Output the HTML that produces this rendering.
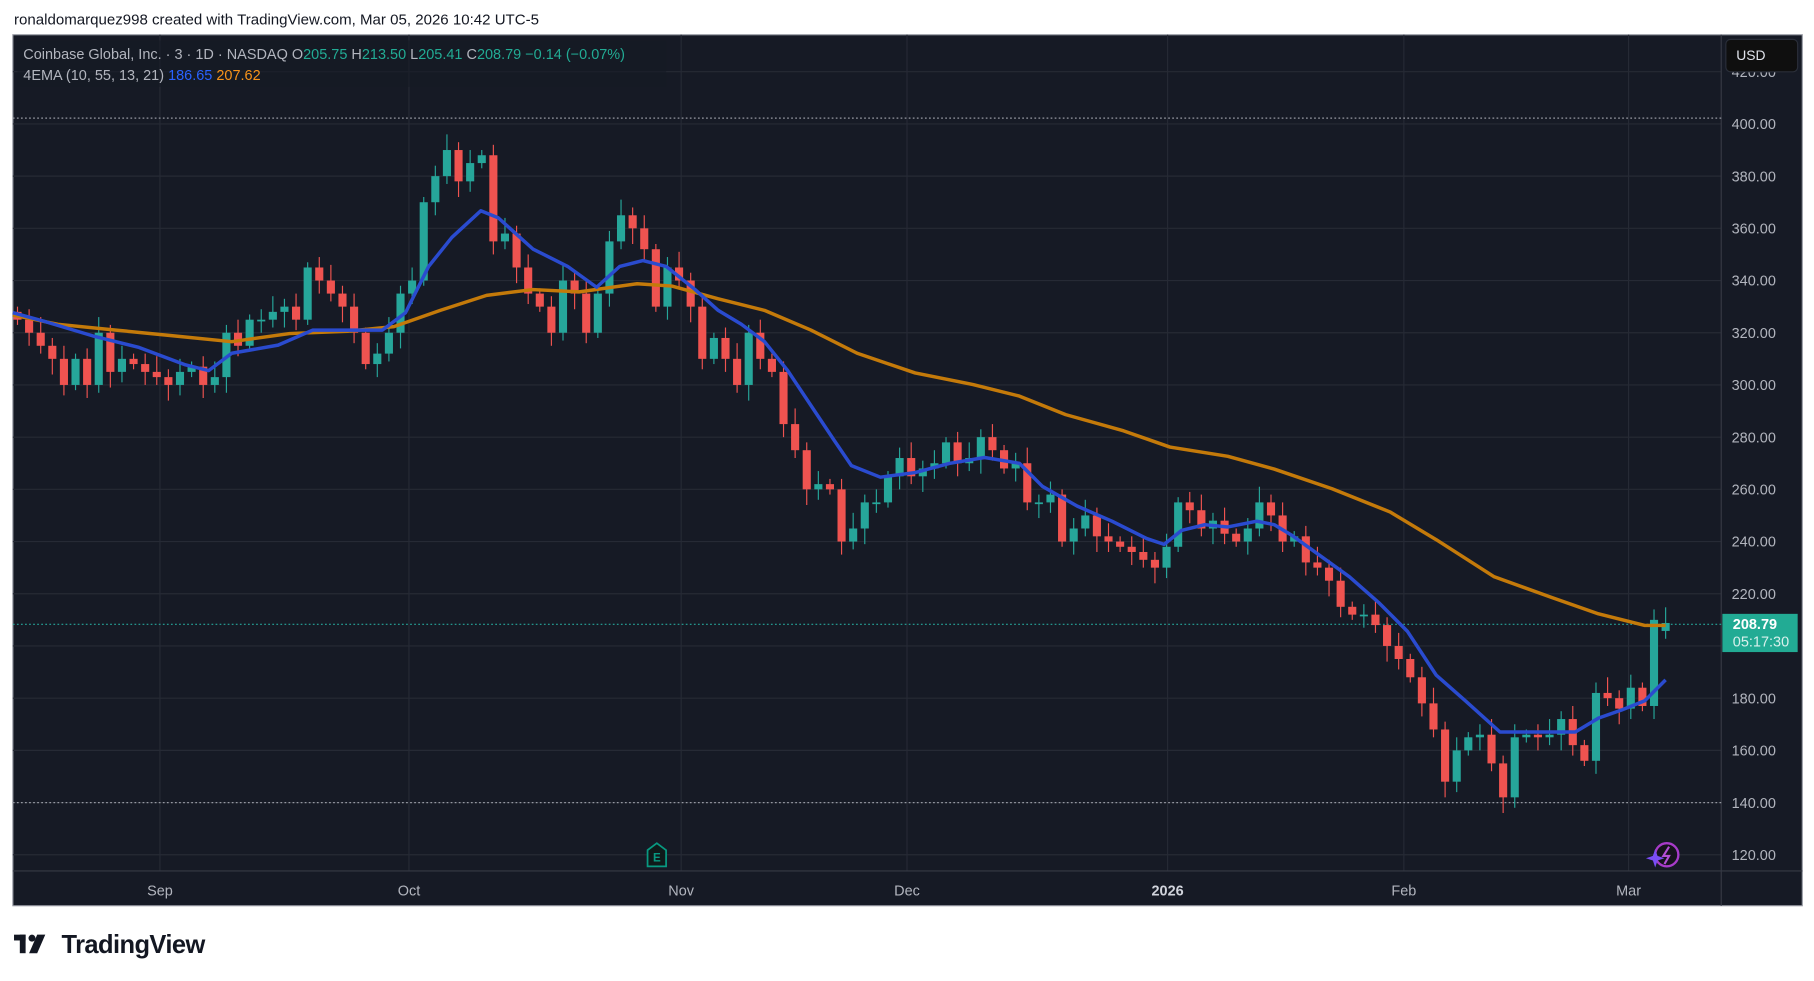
<!DOCTYPE html>
<html><head><meta charset="utf-8"><style>
html,body{margin:0;padding:0;background:#fff;width:1814px;height:981px;overflow:hidden}
svg{display:block}
text{font-family:"Liberation Sans",sans-serif}
</style></head><body>
<svg id="s" width="1814" height="981" viewBox="0 0 1566 847" xmlns="http://www.w3.org/2000/svg">
<rect width="1566" height="847" fill="#fff"/>
<text x="12" y="21" font-size="13" fill="#131722">ronaldomarquez998 created with TradingView.com, Mar 05, 2026 10:42 UTC-5</text>
<rect x="11" y="30" width="1545" height="752" fill="#161a25" stroke="#9598a1" stroke-width="1"/>
<g id="grid" stroke="#262a35" stroke-width="1"></g>
<line x1="1486" y1="30" x2="1486" y2="782" stroke="#363a45"/>
<line x1="11" y1="752" x2="1556" y2="752" stroke="#363a45"/>
<line x1="11" y1="102" x2="1486" y2="102" stroke="#9598a1" stroke-dasharray="1.5 2"/>
<line x1="11" y1="693" x2="1486" y2="693" stroke="#9598a1" stroke-dasharray="1.5 2"/>
<line x1="11" y1="539" x2="1486" y2="539" stroke="#26a69a" stroke-dasharray="1.5 2"/>
<g id="c"></g>
<polyline fill="none" stroke="#c47a0a" stroke-width="3" stroke-linejoin="round" points="11,272 50,280 100,285 150,290 200,295 250,288 300,286 340,282 380,268 420,255 460,250 500,252 550,245 580,247 620,258 660,268 700,285 740,305 790,322 840,332 880,342 920,358 970,372 1010,386 1060,394 1100,405 1150,422 1200,442 1240,466 1290,498 1340,516 1380,530 1420,540 1438,540"/>
<polyline fill="none" stroke="#2a4bcf" stroke-width="3" stroke-linejoin="round" points="11,270 40,278 80,290 120,300 160,315 180,320 200,305 240,298 270,285 300,285 330,285 350,270 370,230 390,205 415,182 430,188 460,215 490,230 515,248 535,230 555,225 575,230 600,250 620,268 640,280 660,295 680,320 700,350 720,380 735,402 760,412 790,408 820,400 850,395 880,400 900,420 930,437 960,450 990,465 1005,470 1020,458 1040,453 1060,455 1085,450 1100,453 1115,462 1140,480 1165,498 1190,520 1215,545 1240,583 1265,605 1295,632 1330,632 1360,632 1380,620 1400,613 1420,605 1438,587"/>
<g id="pl" font-size="12.5" fill="#b2b5be"></g>
<rect x="1490" y="34" width="62" height="28" rx="4" fill="#0f0f0f" stroke="#2a2e39"/>
<text x="1499" y="52" font-size="12" fill="#e0e3eb">USD</text>
<rect x="1487" y="530" width="65" height="33" fill="#22ab94"/>
<text x="1496" y="543" font-size="12.5" font-weight="bold" fill="#fff">208.79</text>
<text x="1496" y="558" font-size="12.5" fill="#d8f0ec">05:17:30</text>
<g font-size="12.5" fill="#b2b5be" text-anchor="middle">
<text x="138" y="773">Sep</text><text x="353" y="773">Oct</text><text x="588" y="773">Nov</text><text x="783" y="773">Dec</text><text x="1008" y="773" font-weight="bold" fill="#d1d4dc">2026</text><text x="1212" y="773">Feb</text><text x="1406" y="773">Mar</text></g>
<rect x="15" y="35" width="560" height="40" fill="#161a25" opacity="0.6"/>
<text x="20" y="51" font-size="12.5" fill="#b2b5be">Coinbase Global, Inc. · 3 · 1D · NASDAQ  O<tspan fill="#22ab94">205.75</tspan>  H<tspan fill="#22ab94">213.50</tspan>  L<tspan fill="#22ab94">205.41</tspan>  C<tspan fill="#22ab94">208.79</tspan>  <tspan fill="#22ab94">−0.14 (−0.07%)</tspan></text>
<text x="20" y="69" font-size="12.5" fill="#b2b5be">4EMA (10, 55, 13, 21)  <tspan fill="#2962ff">186.65</tspan>  <tspan fill="#f7931a">207.62</tspan></text>
<path d="M559,734 L567,728 L575,734 L575,748 L559,748 Z" fill="#0f1a1a" stroke="#089981" stroke-width="1.5"/>
<text x="567" y="744" font-size="10" fill="#089981" text-anchor="middle" font-weight="bold">E</text>
<circle cx="1439" cy="738" r="10" fill="#16131d" stroke="#a73bc9" stroke-width="2"/>
<path d="M1441,731 L1436,739 L1441,739 L1437,746" fill="none" stroke="#b44fd6" stroke-width="1.8"/>
<path d="M1429,733 L1431,739 L1437,741 L1431,743 L1429,749 L1427,743 L1421,741 L1427,739Z" fill="#7a4df5"/>
<g transform="translate(12,804)" fill="#131722">
<rect x="0" y="3" width="10" height="5"/><rect x="5" y="3" width="5" height="16"/>
<circle cx="15.5" cy="6" r="3"/>
<path d="M20,3 L27,3 L20,19 L13,19 Z"/>
</g>
<text x="53" y="823" font-size="22" font-weight="bold" fill="#131722" letter-spacing="-0.5">TradingView</text>
</svg>
<script>
var NS="http://www.w3.org/2000/svg";
function el(p,t,a){var e=document.createElementNS(NS,t);for(var k in a)e.setAttribute(k,a[k]);p.appendChild(e);return e;}
function Y(p){return 107+(400-p)*2.2536;}
var g=document.getElementById('grid');
[138,353,588,783,1008,1212,1406].forEach(function(x){el(g,'line',{x1:x,y1:30,x2:x,y2:752});});
var pl=document.getElementById('pl');
for(var p=420;p>=120;p-=20){var y=Y(p);el(g,'line',{x1:11,y1:y,x2:1486,y2:y});var t=el(pl,'text',{x:1495,y:y+4.5});t.textContent=p.toFixed(2);}
var cl=[325,320,315,310,300,310,300,320,305,310,308,305,303,300,305,307,300,303,320,315,325,325,328,330,325,345,340,335,330,320,308,312,320,335,340,370,380,390,378,385,388,355,358,345,335,330,320,340,335,320,335,355,365,360,352,330,345,340,330,310,318,310,300,320,310,305,285,275,260,262,260,240,245,255,255,265,272,265,268,270,278,270,272,280,275,268,270,255,255,258,240,245,250,242,240,238,236,233,230,238,255,252,245,248,243,240,245,255,250,240,242,232,230,225,215,212,212,208,200,195,188,178,168,148,160,165,166,155,142,165,166,165,166,172,162,156,182,180,176,184,177,210,208.8];
var c=document.getElementById('c');var n=cl.length;var step=(1438-15)/(n-1);
var prev=328;
for(var i=0;i<n;i++){
 var o=prev,cc=cl[i];if(i==n-1)o=205.75;
 var up=cc>=o;var col=up?'#26a69a':'#ef5350';
 var hi=Math.max(o,cc)+2+((i*7)%5),lo=Math.min(o,cc)-2-((i*3)%5);
 var x=15+i*step;
 el(c,'line',{x1:x,y1:Y(hi),x2:x,y2:Y(lo),stroke:col,'stroke-width':1});
 var y1=Y(Math.max(o,cc)),h=Math.max(1.5,Y(Math.min(o,cc))-y1);
 el(c,'rect',{x:x-3.5,y:y1,width:7,height:h,fill:col});
 prev=cc;
}
</script>
</body></html>
